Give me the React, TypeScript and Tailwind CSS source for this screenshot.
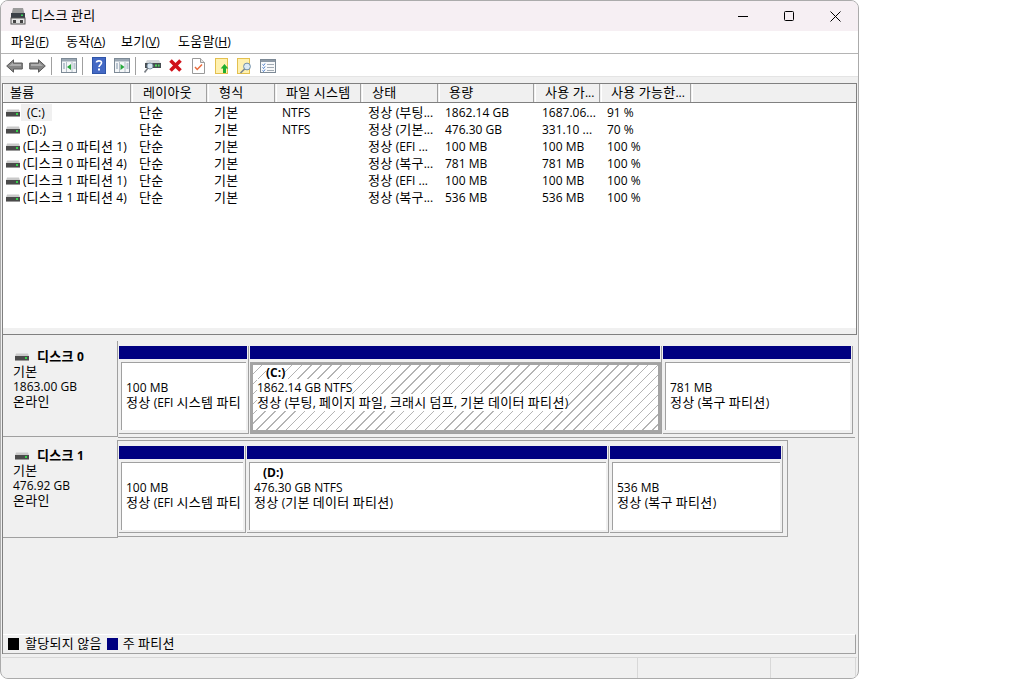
import React from "react";

const uiFont = "font-['Open_Sans','Noto_Sans_CJK_KR',sans-serif]";

const columns = [
  { label: "볼륨", width: "w-[128px]", pad: "pl-[6px]" },
  { label: "레이아웃", width: "w-[75px]", pad: "pl-[10px]" },
  { label: "형식", width: "w-[67px]", pad: "pl-[10px]" },
  { label: "파일 시스템", width: "w-[85px]", pad: "pl-[9px]" },
  { label: "상태", width: "w-[76px]", pad: "pl-[9px]" },
  { label: "용량", width: "w-[95px]", pad: "pl-[9px]" },
  { label: "사용 가...", width: "w-[65px]", pad: "pl-[9px]" },
  { label: "사용 가능한...", width: "w-[90px]", pad: "pl-[9px]" },
];

const volumes = [
  ["(C:)", "단순", "기본", "NTFS", "정상 (부팅...", "1862.14 GB", "1687.06...", "91 %"],
  ["(D:)", "단순", "기본", "NTFS", "정상 (기본...", "476.30 GB", "331.10 ...", "70 %"],
  ["(디스크 0 파티션 1)", "단순", "기본", "", "정상 (EFI ...", "100 MB", "100 MB", "100 %"],
  ["(디스크 0 파티션 4)", "단순", "기본", "", "정상 (복구...", "781 MB", "781 MB", "100 %"],
  ["(디스크 1 파티션 1)", "단순", "기본", "", "정상 (EFI ...", "100 MB", "100 MB", "100 %"],
  ["(디스크 1 파티션 4)", "단순", "기본", "", "정상 (복구...", "536 MB", "536 MB", "100 %"],
];

const cellWidths = ["w-[133px]", "w-[75px]", "w-[68px]", "w-[86px]", "w-[77px]", "w-[97px]", "w-[65px]", "w-[80px]"];

// hangul runs a bit wider than the latin next to it, like the real font
const Ko = ({ text }: { text?: string }) => (
  <>
    {(text ?? "").split(/([가-힣]+)/).map((part, i) =>
      i % 2 === 1 ? (
        <span key={i} className="text-[13px] tracking-[0.3px]">
          {part}
        </span>
      ) : (
        part
      )
    )}
  </>
);

const DriveIcon = () => (
  <svg width="14" height="8" viewBox="0 0 14 8" className="shrink-0">
    <path d="M1 0.5h12l1 3H0z" fill="#c9c9c9" />
    <rect x="0" y="3" width="14" height="4" fill="#4a4a4a" />
    <rect x="0" y="7" width="14" height="1" fill="#9a9a9a" />
    <rect x="10" y="4" width="2" height="2" fill="#35d24a" />
  </svg>
);

const TitleIcon = () => (
  <svg width="18" height="18" viewBox="0 0 18 18">
    <path d="M4 1h10l1.5 6h-13z" fill="#9b9b9b" />
    <rect x="2" y="6" width="14" height="5" fill="#3a3f46" />
    <rect x="12" y="7.5" width="2" height="1.5" fill="#37d35a" />
    <rect x="2" y="11" width="14" height="6" fill="#e6e6e6" stroke="#555" strokeWidth="1" />
    <rect x="4" y="13" width="3" height="3" fill="#444" />
    <rect x="11" y="13" width="3" height="3" fill="#444" />
  </svg>
);

const ArrowIcon = ({ flip }: { flip?: boolean }) => (
  <svg width="17" height="14" viewBox="0 0 17 14" className={flip ? "-scale-x-100" : ""}>
    <path d="M0.7 7L7.5 0.8V4H16.3V10H7.5V13.2z" fill="#858585" stroke="#5a5a5a" />
    <path d="M3 7L7 3.6V5H15V7z" fill="#adadad" />
  </svg>
);

const PanelIcon = ({ right }: { right?: boolean }) => (
  <svg width="16" height="15" viewBox="0 0 16 15">
    <rect x="0.5" y="0.5" width="15" height="14" fill="#f4f6f8" stroke="#7d8a96" />
    <rect x="1" y="1" width="14" height="2.5" fill="#9aa7b3" />
    <path d="M5.5 4v10M11 4v10" stroke="#b4bec8" />
    <path d="M2 6h2M2 8h2M2 10h2M12.5 6h2M12.5 8h2M12.5 10h2" stroke="#7f93a8" />
    <path d={right ? "M6.5 6l4 3-4 3z" : "M10 6l-4 3 4 3z"} fill="#27a83c" />
  </svg>
);

const HelpIcon = () => (
  <svg width="14" height="17" viewBox="0 0 14 17">
    <rect width="14" height="17" fill="#2f55a8" />
    <rect x="1" y="1" width="12" height="15" fill="#4469c4" />
    <path d="M4.5 5.5C4.5 3.5 9.5 3 9.5 5.8 9.5 7.8 7 7.8 7 10" fill="none" stroke="#fff" strokeWidth="1.7" />
    <rect x="6" y="11.5" width="2" height="2" fill="#fff" />
  </svg>
);

const ConnectIcon = () => (
  <svg width="17" height="16" viewBox="0 0 17 16">
    <path d="M3 2h12l2 4H1z" fill="#d4d7da" />
    <rect x="1" y="5" width="16" height="5" fill="#474d52" />
    <rect x="11" y="6.5" width="2" height="2" fill="#4ade5a" />
    <rect x="14" y="6.5" width="1.5" height="2" fill="#4ade5a" />
    <circle cx="6" cy="8" r="3" fill="#dbe8f2" stroke="#7d95a8" />
    <path d="M4 10l-3.5 4.5" stroke="#7a7f86" strokeWidth="1.6" />
  </svg>
);

const DeleteIcon = () => (
  <svg width="15" height="15" viewBox="0 0 15 15">
    <path d="M2.5 2.5l10 10M12.5 2.5l-10 10" stroke="#d0121b" strokeWidth="3.6" />
  </svg>
);

const CheckDocIcon = () => (
  <svg width="13" height="16" viewBox="0 0 13 16">
    <path d="M0.5 0.5h8l4 4v11h-12z" fill="#fff" stroke="#9a9a9a" />
    <path d="M8.5 0.5v4h4" fill="#e4e4e4" stroke="#9a9a9a" />
    <path d="M3 9l2.2 2.5L10 6.5" fill="none" stroke="#ea6b3c" strokeWidth="1.5" />
  </svg>
);

const FolderUpIcon = () => (
  <svg width="14" height="16" viewBox="0 0 14 16">
    <rect x="0.5" y="0.5" width="12" height="15" fill="#fff1b0" stroke="#e3c04f" />
    <path d="M9.5 6l3.8 4.5H11V15H8v-4.5H5.7z" fill="#1fae2f" />
  </svg>
);

const FolderSearchIcon = () => (
  <svg width="15" height="16" viewBox="0 0 15 16">
    <rect x="0.5" y="0.5" width="12" height="15" fill="#fff1b0" stroke="#e3c04f" />
    <circle cx="10" cy="8.5" r="3.4" fill="#dbeaf5" stroke="#6f8ea6" />
    <path d="M7.6 11L3.5 15" stroke="#7b8791" strokeWidth="1.7" />
  </svg>
);

const ListIcon = () => (
  <svg width="16" height="14" viewBox="0 0 16 14">
    <rect x="0.5" y="0.5" width="15" height="13" fill="#f8f9fa" stroke="#7d8a96" />
    <rect x="1" y="1" width="14" height="2" fill="#8d99a5" />
    <path d="M2.5 5.5l1 1 1.5-2M2.5 8.5l1 1 1.5-2M2.5 11.5l1 1 1.5-2" fill="none" stroke="#3f77c9" />
    <path d="M7 5.5h7M7 8.5h7M7 11.5h7" stroke="#a3acb5" />
  </svg>
);

const ToolButton = ({ children }: { children: React.ReactNode }) => (
  <div className="w-[23px] h-full flex items-center justify-center">{children}</div>
);

const ToolSeparator = ({ width }: { width: string }) => (
  <div className={`${width} h-full flex items-center`}>
    <div className="ml-[2px] w-px h-[18px] bg-[#a0a0a0]" />
  </div>
);

interface partitionInterface {
  width: string;
  bold?: string;
  boldPad?: string;
  size: string;
  status: string;
  selected?: boolean;
}

const Partition = ({ width, bold, boldPad, size, status, selected }: partitionInterface) => (
  <div className={`${width} h-full shrink-0 mr-0`}>
    <div className="h-full mr-[1px] flex flex-col border-r border-[#a0a0a0]">
      <div className="h-[13px] shrink-0 bg-[#000080] mr-[1px]" />
      <div className="flex-1 flex flex-col bg-[#f0f0f0] border-b border-[#a0a0a0]">
        {selected ? (
          <div className="h-[71px] mt-[3px] border-[3px] border-[#a4a4a4] bg-white bg-[repeating-linear-gradient(135deg,#ffffff_0px,#ffffff_6px,#b4b4b4_6px,#b4b4b4_7px)] pl-[4px] text-[12px] leading-[15px] whitespace-nowrap overflow-hidden">
            <div className="h-[15px]">
              <span className={`${boldPad} font-bold bg-white`}>{bold}</span>
            </div>
            <div><span className="bg-white">{size}</span></div>
            <div><span className="bg-white"><Ko text={status} /></span></div>
          </div>
        ) : (
          <div className="h-[68px] mt-[3px] ml-[2px] mr-[2px] border-t border-l border-[#a0a0a0] bg-white pl-[4px] pt-[2px] text-[12px] leading-[15px] whitespace-nowrap overflow-hidden">
            <div className={`h-[15px] ${boldPad} font-bold`}>{bold}</div>
            <div>{size}</div>
            <div><Ko text={status} /></div>
          </div>
        )}
      </div>
    </div>
  </div>
);

const DiskInfo = ({ name, size }: { name: string; size: string }) => (
  <div className="w-[115px] h-full shrink-0 bg-[#f0f0f0] border-r border-b border-[#a0a0a0] pl-[10px] pt-[8px] text-[12px] leading-[15px]">
    <div className="flex items-center gap-[8px] pl-[2px] h-[15px] font-bold">
      <DriveIcon />
      <span><Ko text={name} /></span>
    </div>
    <div><Ko text="기본" /></div>
    <div>{size}</div>
    <div><Ko text="온라인" /></div>
  </div>
);

const App = () => {
  return (
    <div className={`w-[1014px] h-[679px] bg-white text-black text-[12px] overflow-hidden ${uiFont}`}>
      <div className="w-[859px] h-[679px] flex flex-col bg-[#f0f0f0] border border-[#ababab] rounded-[8px] overflow-hidden">
        <div className="h-[30px] shrink-0 bg-[#f6eff3] flex items-center">
          <div className="pl-[8px] pr-[4px] flex"><TitleIcon /></div>
          <span><Ko text="디스크 관리" /></span>
          <div className="ml-auto flex h-full">
            <div className="w-[46px] flex items-center justify-center">
              <div className="w-[10px] h-px bg-black" />
            </div>
            <div className="w-[46px] flex items-center justify-center">
              <div className="w-[10px] h-[10px] border border-black rounded-[1.5px]" />
            </div>
            <div className="w-[46px] flex items-center justify-center">
              <svg width="11" height="11" viewBox="0 0 11 11">
                <path d="M0.5 0.5l10 10M10.5 0.5l-10 10" stroke="#000" strokeWidth="1" />
              </svg>
            </div>
          </div>
        </div>

        <div className="h-[23px] shrink-0 bg-white border-b border-[#b4b4b4] flex items-center">
          <span className="ml-[10px] w-[55px]"><Ko text="파일" />(<span className="underline">F</span>)</span>
          <span className="w-[55px]"><Ko text="동작" />(<span className="underline">A</span>)</span>
          <span className="w-[57px]"><Ko text="보기" />(<span className="underline">V</span>)</span>
          <span><Ko text="도움말" />(<span className="underline">H</span>)</span>
        </div>

        <div className="h-[22px] shrink-0 bg-white flex items-center pl-[2px] pt-[1px]">
          <ToolButton><ArrowIcon /></ToolButton>
          <ToolButton><ArrowIcon flip /></ToolButton>
          <ToolSeparator width="w-[8px]" />
          <ToolButton><PanelIcon /></ToolButton>
          <ToolSeparator width="w-[7px]" />
          <ToolButton><HelpIcon /></ToolButton>
          <ToolButton><PanelIcon right /></ToolButton>
          <ToolSeparator width="w-[8px]" />
          <ToolButton><ConnectIcon /></ToolButton>
          <ToolButton><DeleteIcon /></ToolButton>
          <ToolButton><CheckDocIcon /></ToolButton>
          <ToolButton><FolderUpIcon /></ToolButton>
          <ToolButton><FolderSearchIcon /></ToolButton>
          <ToolButton><ListIcon /></ToolButton>
        </div>

        <div className="h-[7px] shrink-0 bg-[#f0f0f0] border-t border-[#e4e4e4]" />

        <div className="h-[252px] shrink-0 mx-[1px] flex flex-col border border-[#808080]">
          <div className="h-[19px] shrink-0 flex bg-[#f0f0f0] border-b border-[#808080]">
            {columns.map((col) => (
              <div
                key={col.label}
                className={`${col.width} ${col.pad} mr-[1px] shrink-0 h-full flex items-center border-r border-r-[#a0a0a0] border-l border-l-white whitespace-nowrap overflow-hidden`}
              >
                <span><Ko text={col.label} /></span>
              </div>
            ))}
            <div className="flex-1 border-l border-white" />
          </div>
          <div className="flex-1 bg-white pt-[1px]">
            {volumes.map((row, i) => (
              <div key={row[0]} className="h-[17px] flex items-center">
                <div className={`${cellWidths[0]} shrink-0 flex items-center pl-[3px]`}>
                  <DriveIcon />
                  <span className={i === 0 ? "ml-[1px] pl-[6px] bg-[#f0f0f0] h-[17px] leading-[17px] w-[31px] whitespace-nowrap" : i === 1 ? "ml-[1px] pl-[6px] w-[31px] whitespace-nowrap" : "ml-[3px] whitespace-nowrap"}>
                    <Ko text={row[0]} />
                  </span>
                </div>
                {row.slice(1).map((cell, j) => (
                  <div key={j} className={`${cellWidths[j + 1]} shrink-0 pl-[3px] whitespace-nowrap overflow-hidden`}>
                    <Ko text={cell} />
                  </div>
                ))}
              </div>
            ))}
          </div>
          <div className="h-[6px] shrink-0 bg-[#f0f0f0]" />
        </div>

        <div className="flex-1 flex flex-col bg-[#f0f0f0] mx-[1px]">
          <div className="flex-1 flex flex-col border-l border-[#808080]">
            <div className="h-[6px] shrink-0" />
            <div className="h-[96px] shrink-0 flex">
              <DiskInfo name="디스크 0" size="1863.00 GB" />
              <div className="flex-1 pl-px pt-[5px] pb-[3px] flex">
                <Partition width="w-[131px]" size="100 MB" status="정상 (EFI 시스템 파티" />
                <Partition width="w-[413px]" bold="(C:)" boldPad="ml-[9px]" size="1862.14 GB NTFS" status="정상 (부팅, 페이지 파일, 크래시 덤프, 기본 데이터 파티션)" selected />
                <Partition width="w-[191px]" size="781 MB" status="정상 (복구 파티션)" />
              </div>
            </div>
            <div className="h-px shrink-0 ml-[115px] mr-[2px] bg-[#a0a0a0]" />
            <div className="h-[98px] shrink-0 mt-[2px] flex">
              <DiskInfo name="디스크 1" size="476.92 GB" />
              <div className="w-[670px] h-[97px] border-r border-t border-b border-[#a0a0a0] pl-px pt-[5px] pb-[3px] flex">
                <Partition width="w-[128px]" size="100 MB" status="정상 (EFI 시스템 파티" />
                <Partition width="w-[363px]" bold="(D:)" boldPad="ml-[9px]" size="476.30 GB NTFS" status="정상 (기본 데이터 파티션)" />
                <Partition width="w-[174px]" size="536 MB" status="정상 (복구 파티션)" />
              </div>
            </div>
            <div className="flex-1" />
            <div className="h-[20px] shrink-0 mr-[1px] flex items-center border-t border-t-white border-b border-b-[#a0a0a0] border-r border-r-[#a0a0a0] pl-[5px]">
              <div className="w-[11px] h-[12px] bg-black" />
              <span className="ml-[6px]"><Ko text="할당되지 않음" /></span>
              <div className="ml-[5px] w-[11px] h-[12px] bg-[#000080]" />
              <span className="ml-[5px]"><Ko text="주 파티션" /></span>
            </div>
          </div>
          <div className="h-[3px] shrink-0" />
          <div className="h-[21px] shrink-0 flex border-t border-[#d8d8d8]">
            <div className="w-[636px] border-r border-[#d8d8d8]" />
            <div className="w-[133px] border-r border-[#d8d8d8]" />
            <div className="w-[85px] border-r border-[#d8d8d8]" />
          </div>
        </div>
      </div>
    </div>
  );
};

export default App;
